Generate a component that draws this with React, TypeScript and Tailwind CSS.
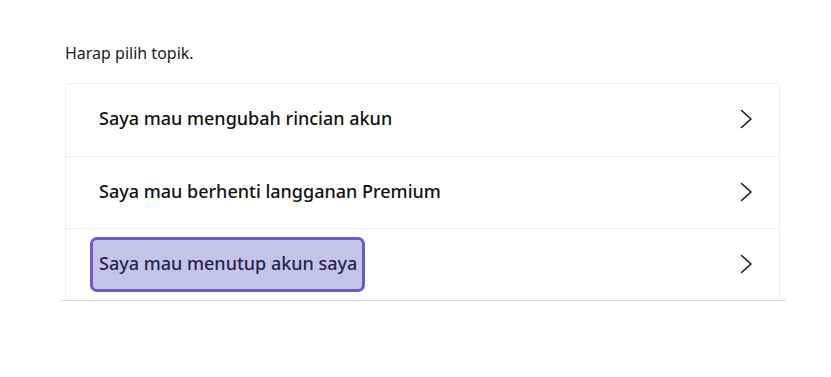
const topics = [
  'Saya mau mengubah rincian akun',
  'Saya mau berhenti langganan Premium',
  'Saya mau menutup akun saya',
];

function Chevron() {
  return (
    <svg width="13" height="20" viewBox="0 0 13 20" fill="none" className="shrink-0 mb-[2px]">
      <path d="M1.5 1.5 L11 10 L1.5 18.5" stroke="#1a1a1a" strokeWidth="1.6" strokeLinecap="round" strokeLinejoin="round" />
    </svg>
  );
}

export default function App() {
  return (
    <div className="w-[831px] h-[377px] bg-white font-['Noto_Sans',sans-serif] text-[#121212]">
      <div className="pl-[65px] pr-[51px] pt-[42px]">
        <p className="text-[16px] leading-[22px] text-[#1a1a1a]">Harap pilih topik.</p>
        <div className="mt-[19px]">
          <div className="border-l border-r border-t border-[#eeeeee] rounded-t-[4px]">
            {topics.map((topic, i) => (
              <div
                key={i}
                className={`flex items-center justify-between h-[72px] pl-[24px] pr-[26px] ${i > 0 ? 'border-t border-[#eeeeee]' : ''}`}
              >
                {i === 2 ? (
                  <span className="flex items-center h-[55px] pl-[6px] pr-[5px] pb-[2px] rounded-[7px] border-[3px] border-[#6a5cc4] bg-[#c6c3ea] text-[#28234a] text-[18px] font-medium">
                    {topic}
                  </span>
                ) : (
                  <span className="pl-[9px] pb-[3px] text-[18px] font-medium">{topic}</span>
                )}
                <Chevron />
              </div>
            ))}
          </div>
          <div className="h-px bg-[#d9d8e2] -ml-[4px] -mr-[6px]" />
        </div>
      </div>
    </div>
  );
}
